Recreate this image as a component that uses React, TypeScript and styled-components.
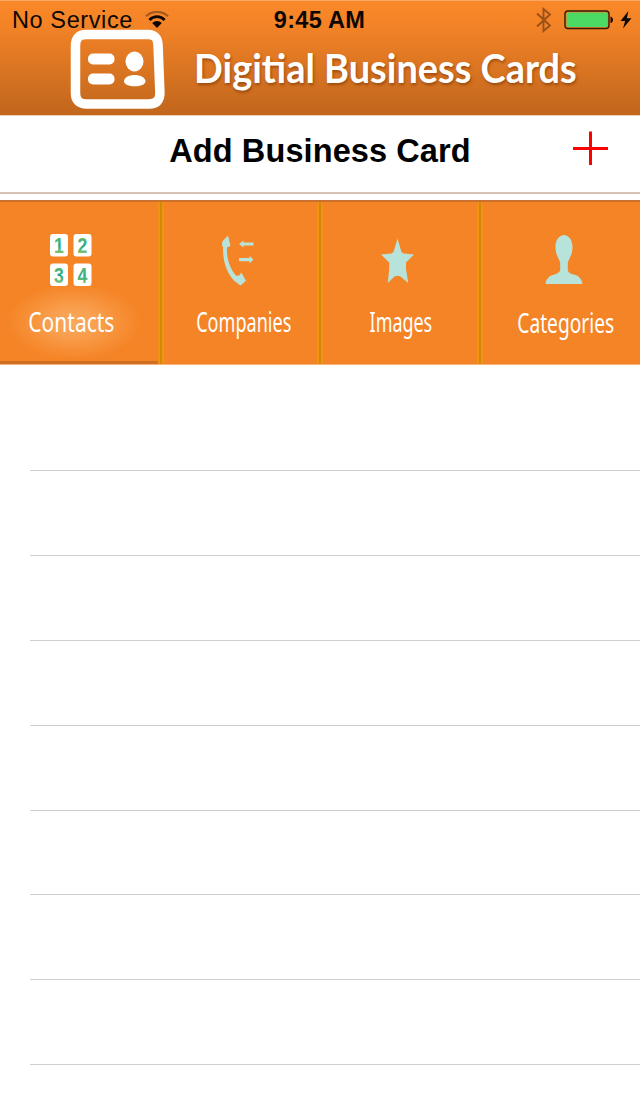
import React from 'react'
import styled, { createGlobalStyle } from 'styled-components'

const GlobalStyle = createGlobalStyle`
  * {
    box-sizing: border-box;
  }

  body {
    margin: 0;
    background: #fff;
    font-family: 'Liberation Sans', Arial, sans-serif;
  }
`

const Screen = styled.div`
  width: 640px;
  height: 1096px;
  display: flex;
  flex-direction: column;
  overflow: hidden;
  background: #fff;
`

const Header = styled.header`
  height: 116px;
  flex: none;
  border-top: 1px solid #f9a763;
  border-bottom: 1px solid #f0cfb4;
  background: linear-gradient(#f98829 0%, #f58427 18%, #c4681d 94%, #c4681d 100%);
`

const StatusBar = styled.div`
  height: 38px;
  display: grid;
  grid-template-columns: 1fr auto 1fr;
  align-items: center;
  padding: 0 9px 0 12px;
  font-size: 23.5px;
  color: #0d0703;
`

const Carrier = styled.div`
  display: flex;
  align-items: center;
  gap: 12px;
  letter-spacing: 0.6px;
`

const Clock = styled.div`
  margin-right: 4px;
  font-weight: 700;
  letter-spacing: 0.3px;
`

const Indicators = styled.div`
  display: flex;
  align-items: center;
  justify-content: flex-end;
`

const Brand = styled.div`
  display: flex;
  align-items: flex-start;
  margin-top: -11px;
  padding-left: 69px;
`

const Stretch = styled.span<{ $scale: number }>`
  display: inline-block;
  white-space: nowrap;
  transform: scaleX(${({ $scale }) => $scale});
`

const BrandName = styled(Stretch)`
  margin: 15px 0 0 28px;
  transform-origin: left center;
  font-family: Lato, 'Open Sans', sans-serif;
  font-size: 40px;
  font-weight: 700;
  line-height: 50px;
  color: #fff;
  text-shadow: 1px 2px 3px rgba(110, 45, 0, 0.55);
`

const ActionBar = styled.div`
  height: 78px;
  flex: none;
  display: grid;
  grid-template-columns: 1fr auto 1fr;
  align-items: start;
  padding: 0 31px;
  border-bottom: 2px solid #d9c3b7;
`

const ActionTitle = styled.h1`
  margin: 16px 0 0;
  font-size: 32.5px;
  font-weight: 700;
  line-height: 38px;
  letter-spacing: 0.1px;
  color: #000;
`

const AddButton = styled.button`
  justify-self: end;
  display: block;
  margin-top: 14px;
  padding: 0;
  border: 0;
  background: none;
`

const divider = 'linear-gradient(90deg, #f58c1c 0, #eb9a08 2px, #d3880d 2.5px, #d3880d 3.5px, #eb9a08 4px, #f58c1c 6px)'

const TabBar = styled.nav`
  height: 165px;
  flex: none;
  display: grid;
  grid-template-columns: repeat(4, 160px);
  margin-top: 6px;
  border-top: 2px solid #cb7130;
  border-bottom: 1px solid #f9b27a;
  background:
    ${divider} 158px 0 / 6px 100% no-repeat,
    ${divider} 317px 0 / 6px 100% no-repeat,
    ${divider} 477px 0 / 6px 100% no-repeat,
    #f58427;
`

const Tab = styled.div<{ $active?: boolean }>`
  display: flex;
  flex-direction: column;
  align-items: center;
  padding-top: 31px;
  ${({ $active }) =>
    $active &&
    `
    margin-right: 2px;
    border-bottom: 3px solid #cf6f1f;
    background: radial-gradient(ellipse 66px 38px at 74px 120px, #fba85a 0%, #f9a050 35%, #f79139 68%, rgba(245, 132, 39, 0) 100%);
  `}
`

const TabIcon = styled.div<{ $shift: number }>`
  height: 56px;
  margin-left: ${({ $shift }) => $shift * 2}px;

  svg {
    display: block;
  }
`

const TabLabel = styled.div<{ $shift: number; $drop?: number }>`
  display: flex;
  justify-content: center;
  width: 0;
  margin-top: ${({ $drop = 0 }) => 13 + $drop}px;
  margin-left: ${({ $shift }) => $shift * 2}px;
  font-family: 'Noto Sans', 'Open Sans', sans-serif;
  font-size: 28px;
  line-height: 38px;
  color: #fff;
`

const List = styled.ul`
  margin: 0;
  padding: 0 0 0 30px;
  list-style: none;
`

const Row = styled.li`
  height: 84.9px;
  border-bottom: 1px solid #cfcfd0;

  &:first-child {
    height: 106px;
  }
`

const WifiIcon = () => (
  <svg width="24" height="18" viewBox="0 0 24 18" fill="none">
    <path d="M1 5.2C7-.6 17-.6 23 5.2" stroke="#a3581e" strokeWidth="2.2" />
    <path d="M4.4 9C8.7 4.6 15.3 4.6 19.6 9" stroke="#0d0703" strokeWidth="2.7" />
    <path d="M7.2 12.1c2.8-2.7 6.8-2.7 9.6 0L12 17z" fill="#0d0703" />
  </svg>
)

const BluetoothIcon = () => (
  <svg width="18" height="26" viewBox="0 0 18 26" fill="none">
    <path d="M2 6.5 15 18.5 8.5 24V2L15 7.5 2 19.5" stroke="#9a5119" strokeWidth="1.9" />
  </svg>
)

const Battery = styled.svg`
  margin: 0 5px 0 11px;
`

const BatteryIcon = () => (
  <Battery width="51" height="20" viewBox="0 0 51 20">
    <rect x="1" y="1" width="44" height="17.5" rx="3" fill="#f58427" stroke="#37190a" strokeWidth="1.4" />
    <rect x="2.6" y="2.6" width="40.8" height="14.3" rx="1.5" fill="#4cd964" />
    <path d="M46.500 6.500c3.200.4 3.200 6.100 0 6.600z" fill="#0d0703" />
  </Battery>
)

const Bolt = styled.svg`
  margin-right: -1px;
`

const BoltIcon = () => (
  <Bolt width="12" height="20" viewBox="0 0 12 20">
    <path d="M8.4 1 .5 11h4.600L3 18.600 11.500 8.300H6.800z" fill="#0d0703" />
  </Bolt>
)

const CardLogo = () => (
  <svg width="97" height="83" viewBox="0 0 97 83">
    <path
      d="M17.500 6.500H79q9.500 0 10 10l1.900 48q.3 11.500-11 11.500H17.500q-11 0-11-11V17.500q0-11 11-11z"
      fill="none"
      stroke="#fff"
      strokeWidth="9.5"
    />
    <rect x="19" y="25.500" width="26.5" height="11" rx="5" fill="#fff" />
    <rect x="19" y="45.500" width="26.5" height="11" rx="5" fill="#fff" />
    <ellipse cx="65.500" cy="33.500" rx="9" ry="10" fill="#fff" />
    <path d="M55 53c1-8 20-8 21.500 0 .5 7-22 7-21.500 0z" fill="#fff" />
  </svg>
)

const PlusIcon = () => (
  <svg width="37" height="36" viewBox="0 0 37 36">
    <path d="M1 18.500h35M18.500 1.500v33.500" stroke="#ff0000" strokeWidth="3" />
  </svg>
)

const tiles = [
  { digit: '1', x: 0, y: 0 },
  { digit: '2', x: 23.5, y: 0 },
  { digit: '3', x: 0, y: 29.5 },
  { digit: '4', x: 23.5, y: 29.5 },
]

const Digits = styled.svg`
  overflow: visible;
`

const ContactsIcon = () => (
  <Digits width="42" height="54" viewBox="0 0 42 54">
    <defs>
      <linearGradient id="digit" x1="0" y1="0" x2="0" y2="1">
        <stop offset="0.1" stopColor="#6fbd5f" />
        <stop offset="0.5" stopColor="#21a88d" />
        <stop offset="0.85" stopColor="#94c766" />
      </linearGradient>
    </defs>
    {tiles.map(({ digit, x, y }) => (
      <g key={digit}>
        <rect x={x} y={y + 1} width="18" height="22.5" rx="3" fill="#fff" />
        <text
          x={x + 9}
          y={y + 20.5}
          textAnchor="middle"
          fontFamily="Liberation Sans, sans-serif"
          fontSize="22"
          fontWeight="700"
          fill="url(#digit)"
          transform={`translate(${(x + 9) * 0.2} 0) scale(0.8 1)`}
        >
          {digit}
        </text>
      </g>
    ))}
  </Digits>
)

const CompaniesIcon = () => (
  <svg width="32" height="54" viewBox="0 0 32 54" fill="#b8e3db">
    <path d="M6 2.500 8.500 13 5 14.500C4.500 26 8 36 14.500 43l3-.7 1.800-2.800L24 47.800 18.500 52.500 12.500 48C4 39 .8 28 1 14L0 12 .5 8.200z" />
    <path d="M17 11l4.500-3.500v2h10v3h-10v2zM31.500 26.600 27.500 23v2.100H17v3.100h10.500v2.200z" />
  </svg>
)

const ImagesIcon = () => (
  <svg width="33" height="54" viewBox="0 0 33 54" fill="#b8e3db">
    <path d="M16.500 5.500 20.500 19l2 1.500L33 21.500 25 29.500v6.500L27.200 50 19.500 43.500q-3-1.500-6 0L6.800 50 8.200 36v-6.500L0 21.500l10.500-1 2-1.500z" />
  </svg>
)

const CategoriesIcon = () => (
  <svg width="38" height="54" viewBox="0 0 38 54" fill="#b8e3db">
    <path d="M19 2c4.500 0 8.500 5 8.500 11.500 0 8.500-2.500 10-4.700 16v8.300c1.700 3.200 4.200 3.200 6.700 3.900 4.500 1 6.500 4 8 8.300q0 1-1 1H1.500q-1.200 0-1-1c1.500-4.800 4-7.300 8-8.300 2.500-.7 4.500-1 6.700-3.900v-8.300c-2.200-6-4.700-7.500-4.700-16C10.500 7 14.500 2 19 2z" />
  </svg>
)

const tabs = [
  { name: 'Contacts', icon: <ContactsIcon />, iconShift: -8, labelShift: -7.2, scale: 0.75, active: true },
  { name: 'Companies', icon: <CompaniesIcon />, iconShift: -2, labelShift: 3.7, scale: 0.645 },
  { name: 'Images', icon: <ImagesIcon />, iconShift: -2.5, labelShift: 0.7, scale: 0.64 },
  { name: 'Categories', icon: <CategoriesIcon />, iconShift: 4.3, labelShift: 5.3, scale: 0.685, drop: 1 },
]

const App: React.FC = () => {
  return (
    <>
      <GlobalStyle />
      <Screen>
        <Header>
          <StatusBar>
            <Carrier>
              No Service
              <WifiIcon />
            </Carrier>
            <Clock>9:45 AM</Clock>
            <Indicators>
              <BluetoothIcon />
              <BatteryIcon />
              <BoltIcon />
            </Indicators>
          </StatusBar>
          <Brand>
            <CardLogo />
            <BrandName $scale={0.948}>Digitial Business Cards</BrandName>
          </Brand>
        </Header>
        <ActionBar>
          <span />
          <ActionTitle>Add Business Card</ActionTitle>
          <AddButton aria-label="Add">
            <PlusIcon />
          </AddButton>
        </ActionBar>
        <TabBar>
          {tabs.map((tab) => (
            <Tab key={tab.name} $active={tab.active}>
              <TabIcon $shift={tab.iconShift}>{tab.icon}</TabIcon>
              <TabLabel $shift={tab.labelShift} $drop={tab.drop}>
                <Stretch $scale={tab.scale}>{tab.name}</Stretch>
              </TabLabel>
            </Tab>
          ))}
        </TabBar>
        <List>
          {Array.from({ length: 8 }, (_, i) => (
            <Row key={i} />
          ))}
        </List>
      </Screen>
    </>
  )
}

export default App
